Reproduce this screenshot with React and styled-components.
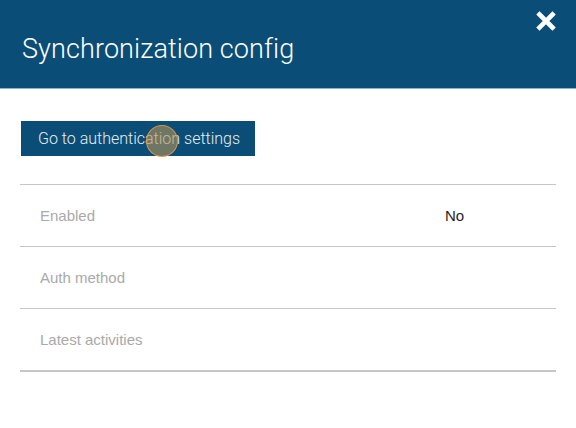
import React from "react";
import styled, { createGlobalStyle } from "styled-components";

const Global = createGlobalStyle`
  html, body {
    margin: 0;
    padding: 0;
    background: #ffffff;
  }
  body {
    font-family: "Roboto", "Liberation Sans", Arial, sans-serif;
    -webkit-font-smoothing: antialiased;
  }
`;

const Modal = styled.div`
  width: 576px;
  height: 428px;
  background: #ffffff;
  overflow: hidden;
`;

const Header = styled.header`
  position: relative;
  height: 89px;
  box-sizing: border-box;
  background: #0a4e77;
  border-bottom: 1px solid #8fb3c4;
  display: flex;
  align-items: center;
  padding: 10px 0 0 22px;
`;

const Title = styled.h1`
  margin: 0;
  color: #ffffff;
  font-family: "Roboto", "Liberation Sans", sans-serif;
  font-weight: 300;
  font-size: 27px;
  letter-spacing: 0.1px;
`;

const CloseButton = styled.button`
  position: absolute;
  top: 11px;
  right: 20px;
  width: 20px;
  height: 20px;
  padding: 0;
  border: 0;
  background: none;
  cursor: pointer;
  display: flex;
  align-items: center;
  justify-content: center;
`;

const Body = styled.div`
  padding: 32px 20px 0 20px;
`;

const ActionButton = styled.button`
  position: relative;
  height: 35px;
  padding: 0 15px 0 17px;
  margin-left: 1px;
  border: 0;
  border-radius: 0;
  background: #0a4e77;
  color: #e8eef2;
  font-family: "Roboto", "Liberation Sans", sans-serif;
  font-weight: 300;
  font-size: 16px;
  cursor: pointer;
`;

/* pointer highlight ring drawn over the button */
const PointerRing = styled.span`
  position: absolute;
  left: 125px;
  top: 4px;
  width: 30px;
  height: 30px;
  border-radius: 50%;
  border: 1.5px solid rgba(232, 150, 72, 0.9);
  background: rgba(178, 145, 86, 0.6);
  pointer-events: none;
`;

const List = styled.dl`
  margin: 28px 0 0 0;
  border-top: 1px solid #c6c6c6;
`;

const Row = styled.div`
  display: grid;
  grid-template-columns: 405px 1fr;
  align-items: center;
  height: 61px;
  padding-left: 20px;
  border-bottom: ${(p) => (p.$last ? "2px" : "1px")} solid #c6c6c6;
`;

const Label = styled.dt`
  margin: 0;
  color: #a9a9a9;
  font-size: 15px;
  font-family: "Liberation Sans", Arial, sans-serif;
  font-weight: 400;
`;

const Value = styled.dd`
  margin: 0;
  color: #1f2328;
  font-size: 15px;
  font-family: "Liberation Sans", Arial, sans-serif;
`;

const CloseIcon = () => (
  <svg width="20" height="20" viewBox="0 0 20 20" aria-hidden="true">
    <path d="M3.5 3.5 L16.5 16.5 M16.5 3.5 L3.5 16.5" stroke="#ffffff" strokeWidth="4.6" strokeLinecap="square" />
  </svg>
);

const rows = [
  { label: "Enabled", value: "No" },
  { label: "Auth method", value: "" },
  { label: "Latest activities", value: "" },
];

export default function App() {
  return (
    <Modal>
      <Global />
      <Header>
        <Title>Synchronization config</Title>
        <CloseButton aria-label="Close">
          <CloseIcon />
        </CloseButton>
      </Header>
      <Body>
        <ActionButton>
          Go to authentication settings
          <PointerRing />
        </ActionButton>
        <List>
          {rows.map((r, i) => (
            <Row key={r.label} $last={i === rows.length - 1}>
              <Label>{r.label}</Label>
              <Value>{r.value}</Value>
            </Row>
          ))}
        </List>
      </Body>
    </Modal>
  );
}
